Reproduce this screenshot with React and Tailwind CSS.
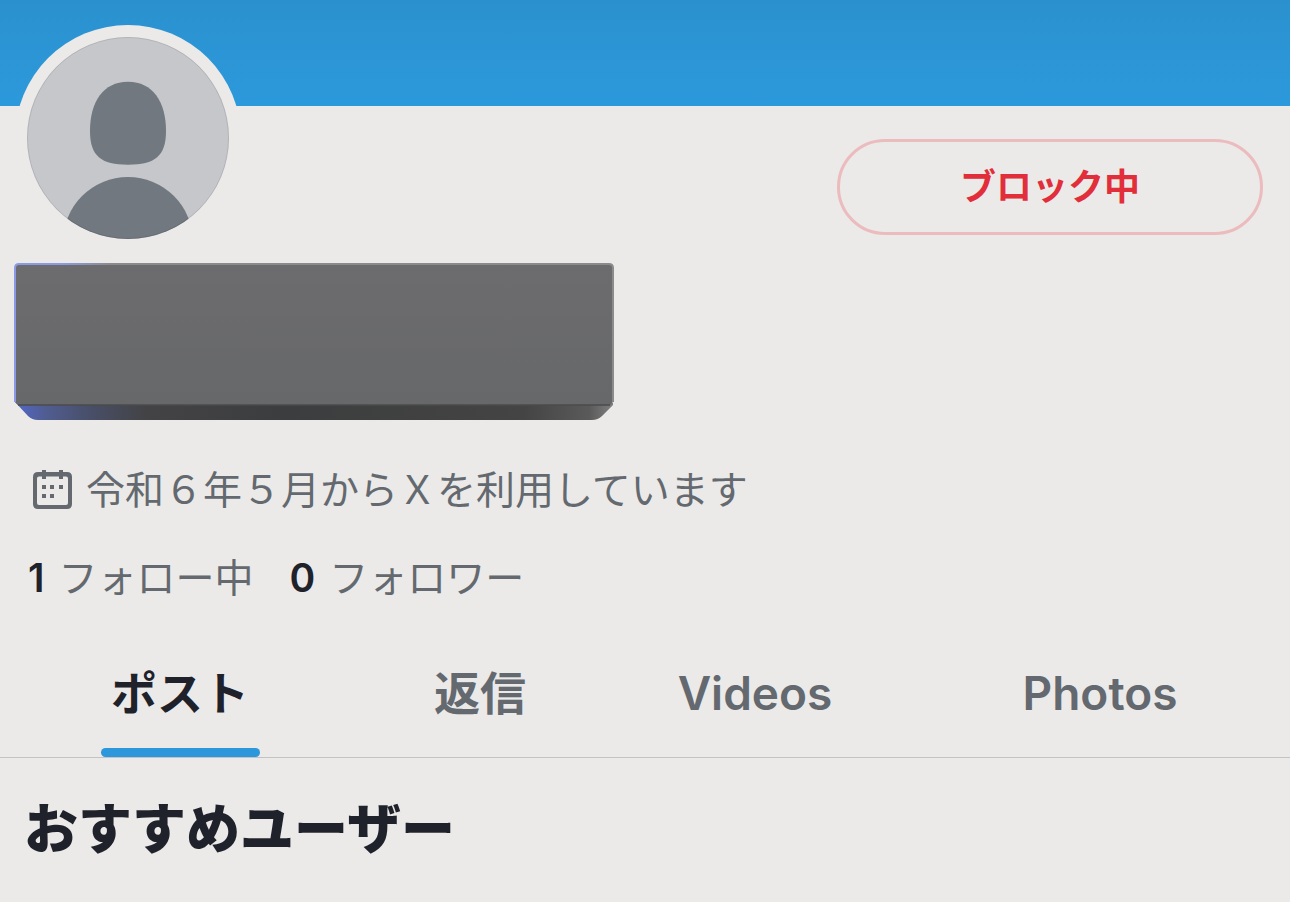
import clsx from "clsx";

const TABS = [
  { label: "ポスト", active: true },
  { label: "返信" },
  { label: "Videos" },
  { label: "Photos" },
];

function Avatar() {
  return (
    <div className="-mt-[81px] size-[226px] shrink-0 rounded-full bg-[#ebeae8] p-3">
      <svg viewBox="0 0 202 202" className="size-full" role="img">
        <defs>
          <clipPath id="avatar-clip">
            <circle cx="101" cy="101" r="101" />
          </clipPath>
        </defs>
        <g clipPath="url(#avatar-clip)">
          <rect width="202" height="202" fill="#c6c7cb" />
          <path
            d="M101 44.7C76 44.7 63 65 63 94C63 119 74 127.7 101 127.7S139 119 139 94C139 65 126 44.7 101 44.7Z"
            fill="#717880"
          />
          <circle cx="101" cy="205" r="65" fill="#717880" />
        </g>
        <circle
          cx="101"
          cy="101"
          r="100.5"
          fill="none"
          stroke="#000"
          strokeOpacity="0.1"
        />
      </svg>
    </div>
  );
}

// Grey slab that covers the display name and handle
function HiddenName() {
  return (
    <svg viewBox="0 0 600 158" className="mt-3 ml-[14px] h-[158px] w-[600px]">
      <defs>
        <linearGradient id="slab-side" x1="0" x2="1" y1="0" y2="0">
          <stop offset="0" stopColor="#5268c8" />
          <stop offset="0.05" stopColor="#505d92" />
          <stop offset="0.13" stopColor="#484e66" />
          <stop offset="0.22" stopColor="#434345" />
          <stop offset="0.45" stopColor="#3c3d3e" />
          <stop offset="0.85" stopColor="#444444" />
          <stop offset="0.96" stopColor="#5a5a5a" />
          <stop offset="1" stopColor="#808080" />
        </linearGradient>
        <linearGradient id="slab-edge" x1="0" x2="1" y1="0" y2="0">
          <stop offset="0" stopColor="#8a9ae6" />
          <stop offset="0.08" stopColor="#8a9ae6" />
          <stop offset="0.16" stopColor="#8b8b8d" />
          <stop offset="1" stopColor="#8b8b8b" />
        </linearGradient>
        <linearGradient id="slab-face" x1="0" x2="0" y1="0" y2="1">
          <stop offset="0" stopColor="#6c6c6e" />
          <stop offset="1" stopColor="#676869" />
        </linearGradient>
      </defs>
      <path
        d="M1 140H599V142L588 153Q584 157 578 157H24Q18 157 14 153L1 139Z"
        fill="url(#slab-side)"
      />
      <path
        d="M4 1H595Q599 1 599 5V139L596 142H4L1 139V5Q1 1 4 1Z"
        fill="url(#slab-face)"
      />
      <path
        d="M1 139V5Q1 1 5 1H595Q599 1 599 5V139"
        fill="none"
        stroke="url(#slab-edge)"
        strokeWidth="2"
      />
      <path d="M4 142H596" stroke="#4b4b4c" strokeWidth="1.5" />
    </svg>
  );
}

function CalendarIcon() {
  return (
    <svg viewBox="0 0 48 48" className="size-12 shrink-0" fill="#63696f">
      <path
        fillRule="evenodd"
        d="M10 6H39Q44 6 44 11V38Q44 43 39 43H10Q5 43 5 38V11Q5 6 10 6ZM11 10.5Q9 10.5 9 12.5V37Q9 39 11 39H38Q40 39 40 37V12.5Q40 10.5 38 10.5Z"
      />
      <path d="M14 4h4v9h-4zM31 4h4v9h-4z" />
      <path d="M14 19h4v4h-4zM22 19h4v4h-4zM31 19h4v4h-4zM14 28h4v4h-4zM22 28h4v4h-4z" />
    </svg>
  );
}

function Count({ value, label }) {
  return (
    <a href="#" className="flex items-center gap-[14px]">
      <span className="font-semibold text-[#1f222b]">{value}</span>
      <span>{label}</span>
    </a>
  );
}

function Tab({ label, active }) {
  return (
    <button
      type="button"
      role="tab"
      aria-selected={Boolean(active)}
      className={clsx(
        "flex flex-col items-center font-semibold",
        active ? "text-[#1f222b]" : "text-[#63696f]"
      )}
    >
      <span className="flex grow items-center pt-3">{label}</span>
      <span
        className={clsx(
          "h-[9px] w-[159px] rounded-full",
          active && "bg-[#2c97da]"
        )}
      />
    </button>
  );
}

export default function App() {
  return (
    <main
      lang="ja"
      className="min-h-screen bg-[#ebeae8] pb-10 font-['Inter','Noto_Sans_CJK_JP',sans-serif] text-[#63696f]"
    >
      <div className="h-[106px] bg-linear-to-b from-[#2b91ce] to-[#2c99dc]" />

      <header className="flex items-start justify-between pr-[27px] pl-[15px]">
        <Avatar />
        <button
          type="button"
          className="mt-[33px] h-24 w-[426px] rounded-full border-3 border-[#ecbbbd] text-[36px] font-bold text-[#e22d3a]"
        >
          ブロック中
        </button>
      </header>

      <HiddenName />

      <div className="px-7 text-[39px] leading-[48px]">
        <p className="mt-[45px] flex items-center gap-[10px]">
          <CalendarIcon />
          <span>令和６年５月からＸを利用しています</span>
        </p>
        <div className="mt-10 flex gap-9">
          <Count value="1" label="フォロー中" />
          <Count value="0" label="フォロワー" />
        </div>
      </div>

      <nav
        role="tablist"
        className="mt-6 grid h-[132px] grid-cols-[36fr_24fr_31fr_38fr] border-b border-[#c3c3c4] text-[46px]"
      >
        {TABS.map((tab) => (
          <Tab key={tab.label} {...tab} />
        ))}
      </nav>

      <h2 className="mt-10 px-6 text-[54px] leading-[64px] font-black text-[#1f222b]">
        おすすめユーザー
      </h2>
    </main>
  );
}
